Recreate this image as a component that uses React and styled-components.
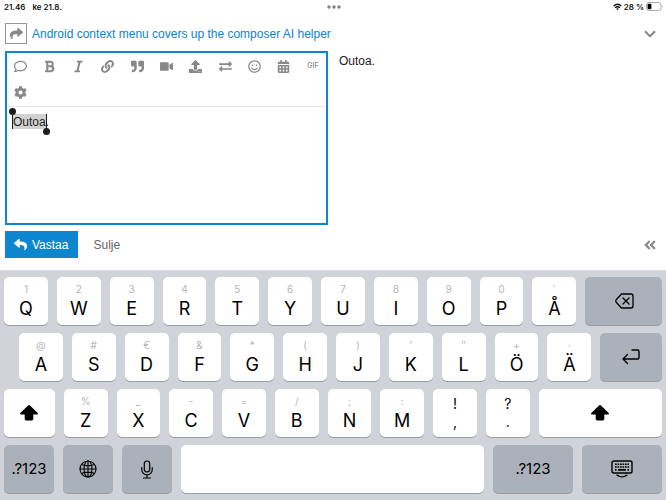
import React, { useState } from "react";
import styled, { createGlobalStyle } from "styled-components";
import {
  FaRegComment, FaBold, FaItalic, FaLink, FaQuoteRight, FaVideo, FaUpload,
  FaExchangeAlt, FaRegSmile, FaCalendarAlt, FaCog, FaReply, FaShare,
  FaAngleDoubleLeft,
} from "react-icons/fa";

const GlobalStyle = createGlobalStyle`
  *, *::before, *::after { box-sizing: border-box; }
  body {
    margin: 0;
    background: #fff;
    color: #222;
    font-family: "Liberation Sans", Arial, sans-serif;
    font-size: 12px;
  }
  button, textarea { font: inherit; color: inherit; margin: 0; }
  button { border: 0; padding: 0; background: none; cursor: pointer; }
  svg { display: block; flex: none; }
`;

const Screen = styled.div`
  min-height: 100vh;
  display: flex;
  flex-direction: column;
`;

const StatusBar = styled.header`
  display: grid;
  grid-template-columns: 1fr auto 1fr;
  align-items: center;
  height: 13px;
  padding: 0 3px 0 4px;
  font: 600 8px/12px Inter, sans-serif;
  color: #111;
`;

const StatusGroup = styled.div`
  display: flex;
  align-items: center;
  gap: ${(p) => (p.$end ? "2px" : "7px")};
  justify-content: ${(p) => (p.$end ? "flex-end" : "flex-start")};
`;

const Composer = styled.main`
  flex: 1;
  display: flex;
  flex-direction: column;
  padding: 10px 5px 12px;
`;

const TitleRow = styled.div`
  display: flex;
  align-items: center;
  gap: 5px;
  height: 21px;
  margin-bottom: 7px;
  padding-right: 5px;
  color: #888;
`;

const ActionButton = styled.button`
  display: grid;
  place-items: center;
  width: 22px;
  height: 21px;
  border: 1px solid #999;
  color: #888;
`;

const TopicLink = styled.a`
  flex: 1;
  color: #0f82c8;
  font-size: 12px;
  line-height: 16px;
  text-decoration: none;
`;

const Panes = styled.div`
  flex: 1;
  display: grid;
  grid-template-columns: 1fr 1fr;
  gap: 10px;
`;

const Editor = styled.section`
  display: flex;
  flex-direction: column;
  border: 2px solid #0e86cd;
`;

const Toolbar = styled.div`
  display: grid;
  grid-template-columns: repeat(11, 20px);
  grid-template-rows: 26px 27px;
  justify-content: space-between;
  margin: 0 1px;
  padding: 0 2px;
  border-bottom: 1px solid #e4e4e4;
`;

const ToolButton = styled.button`
  display: grid;
  place-items: center;
  color: #888;
  font-size: 13px;
`;

const GifLabel = styled.span`
  font: 500 7px/10px Inter, sans-serif;
`;

const TextWrap = styled.div`
  position: relative;
  flex: 1;
  display: flex;
`;

const TextBox = styled.textarea`
  position: relative;
  flex: 1;
  min-width: 0;
  padding: 7px 6px;
  border: 0;
  outline: 0;
  resize: none;
  background: transparent;
  line-height: 16px;
`;

const Selection = styled.span`
  position: absolute;
  top: 7px;
  left: 5px;
  height: 15px;
  line-height: 16px;
  background: #d2d2d2;
  border: solid #1c1c1c;
  border-width: 0 1px;
  color: transparent;
  &::before, &::after {
    content: "";
    position: absolute;
    width: 7px;
    height: 7px;
    border-radius: 50%;
    background: #1c1c1c;
  }
  &::before { left: -4px; top: -6px; }
  &::after { right: -4px; bottom: -6px; }
`;

const Preview = styled.section`
  padding-top: 2px;
  line-height: 16px;
  p { margin: 0; padding-left: 1px; }
`;

const Footer = styled.div`
  display: flex;
  align-items: center;
  height: 27px;
  margin-top: 6px;
  padding-right: 4px;
`;

const ReplyButton = styled.button`
  display: flex;
  align-items: center;
  gap: 5px;
  height: 27px;
  padding: 0 10px 0 9px;
  background: #0c87cf;
  color: #fff;
`;

const TextButton = styled.button`
  margin: 0 auto 0 15px;
  color: #666;
`;

const IconButton = styled.button`
  color: #888;
  font-size: 14px;
`;

const Keyboard = styled.section`
  display: flex;
  flex-direction: column;
  gap: 8px;
  padding: 7px 4px;
  background: #d0d3d9;
  box-shadow: inset 0 1px #d9dce1;
  font-family: Inter, sans-serif;
`;

const KeyRow = styled.div`
  display: flex;
  gap: 9px;
  height: 48px;
  padding-left: ${(p) => (p.$indent ? "15px" : "0")};
`;

const Key = styled.button`
  flex: ${(p) => p.$span} 1 0;
  min-width: 0;
  display: flex;
  flex-direction: column;
  align-items: center;
  justify-content: center;
  border-radius: 5px;
  background: ${(p) => (p.$dark ? "#abb1bb" : "#fff")};
  box-shadow: 0 1px 0 #9a9da3;
  color: #000;
  font-size: 15px;
  line-height: 20px;
`;

const Hint = styled.span`
  height: 16px;
  font-size: 10px;
  line-height: 16px;
  color: #b4b4b6;
`;

const Letter = styled.span`
  height: 24px;
  font-size: 18px;
  line-height: 24px;
`;

const Mark = styled.span`
  height: 18px;
  font-size: 14px;
  line-height: 18px;
`;

const line = { fill: "none", stroke: "currentColor", strokeLinecap: "round", strokeLinejoin: "round" };

const Dots = () => (
  <svg width="14" height="4" viewBox="0 0 14 4" fill="#808080">
    <circle cx="2" cy="2" r="1.7" /><circle cx="7" cy="2" r="1.7" /><circle cx="12" cy="2" r="1.7" />
  </svg>
);
const Wifi = () => (
  <svg width="9" height="8" viewBox="0 0 9 8" {...line} strokeWidth="1.3" strokeLinecap="butt">
    <path d="M.6 3.1Q4.5-.7 8.4 3.1M2.1 4.8Q4.5 2.6 6.9 4.8" />
    <path d="M3.2 5.8Q4.5 4.8 5.8 5.8L4.5 7.3Z" fill="currentColor" stroke="none" />
  </svg>
);
const Battery = () => (
  <svg width="17" height="9" viewBox="0 0 17 9">
    <rect x=".5" y=".5" width="14.5" height="8" rx="2.4" fill="none" stroke="#aaa" />
    <rect x="1.6" y="1.8" width="3.8" height="5.4" rx="1" />
    <path d="M16 3.3q1.3 1.2 0 2.4z" fill="#aaa" />
  </svg>
);
const ChevronDown = () => (
  <svg width="12" height="8" viewBox="0 0 12 8" {...line} strokeWidth="2" strokeLinecap="butt">
    <path d="M1 1.2 6 6.2 11 1.2" />
  </svg>
);
const Backspace = () => (
  <svg width="20" height="16" viewBox="0 0 20 16" {...line} strokeWidth="1.3">
    <path d="M7.5 1H17a2 2 0 0 1 2 2v10a2 2 0 0 1-2 2H7.500L2.2 9.2q-1-1.2 0-2.4ZM9 5l6 6M15 5l-6 6" />
  </svg>
);
const Return = () => (
  <svg width="18" height="16" viewBox="0 0 18 16" {...line} strokeWidth="1.4">
    <path d="M10 1h5.5a1.5 1.5 0 0 1 1.5 1.5v6a1.5 1.5 0 0 1-1.5 1.5H1M5.5 5.500 1 10l4.5 4.5" />
  </svg>
);
const Shift = () => (
  <svg width="18" height="16" viewBox="0 0 18 16">
    <path d="M8.3.3q.7-.6 1.4 0L17.7 8q.8 1.3-.6 1.4H13.3V14q0 1.4-1.4 1.4H6.1Q4.7 15.4 4.7 14V9.4H.9Q-.5 9.3.3 8Z" />
  </svg>
);
const Globe = () => (
  <svg width="18" height="18" viewBox="0 0 18 18" {...line} strokeWidth="1.1">
    <circle cx="9" cy="9" r="8" /><ellipse cx="9" cy="9" rx="4" ry="8" />
    <path d="M9 1v16M1 9h16M2.6 4.5q6.4 2.8 12.8 0M2.6 13.5q6.4-2.8 12.8 0" />
  </svg>
);
const Mic = () => (
  <svg width="12" height="19" viewBox="0 0 12 19" {...line} strokeWidth="1.2">
    <rect x="3.3" y="1" width="5.4" height="11" rx="2.7" />
    <path d="M.8 7.5v2.2a5.2 5.2 0 0 0 10.4 0V7.5M6 15v3M2.5 18h7" />
  </svg>
);
const HideKeyboard = () => (
  <svg width="22" height="18" viewBox="0 0 22 18" {...line} strokeWidth="1.4">
    <rect x="1" y="1" width="20" height="12" rx="1.8" />
    <path d="M4 4.3h14M4 7h14" strokeDasharray="1.7 .8" strokeLinecap="butt" strokeWidth="1.6" />
    <path d="M4 9.9h1.5M7 9.9h8M16.5 9.9H18" strokeLinecap="butt" strokeWidth="1.6" />
    <path d="M6 15.2q5 3.4 10 0" />
  </svg>
);

const tools = [
  ["Lainaa viesti", <FaRegComment />], ["Lihavoitu", <FaBold />], ["Kursiivi", <FaItalic />],
  ["Linkki", <FaLink />], ["Lainaus", <FaQuoteRight />], ["Video", <FaVideo />],
  ["Lataa", <FaUpload />], ["Vaihda suunta", <FaExchangeAlt />], ["Emoji", <FaRegSmile />],
  ["Päivämäärä", <FaCalendarAlt />], ["GIF", <GifLabel>GIF</GifLabel>], ["Asetukset", <FaCog />],
];

const letters = (list, hints) => list.split("").map((c, i) => [c, hints[i]]);
const topRow = letters("QWERTYUIOPÅ", "1234567890`");
const homeRow = letters("ASDFGHJKLÖÄ", "@#€&*()′″+·");
const bottomRow = letters("ZXCVBNM", "%_-=/;:");

const LetterKeys = ({ keys }) =>
  keys.map(([letter, hint]) => (
    <Key key={letter} $span={44}>
      <Hint>{hint}</Hint>
      <Letter>{letter}</Letter>
    </Key>
  ));

export default function App() {
  const [text, setText] = useState("Outoa.");
  return (
    <>
      <GlobalStyle />
      <Screen>
        <StatusBar>
          <StatusGroup><span>21.46</span><span>ke 21.8.</span></StatusGroup>
          <Dots />
          <StatusGroup $end><Wifi /><span>28 %</span><Battery /></StatusGroup>
        </StatusBar>
        <Composer>
          <TitleRow>
            <ActionButton aria-label="Vastaustapa"><FaShare size={13} /></ActionButton>
            <TopicLink href="#topic">Android context menu covers up the composer AI helper</TopicLink>
            <IconButton aria-label="Pienennä"><ChevronDown /></IconButton>
          </TitleRow>
          <Panes>
            <Editor>
              <Toolbar>
                {tools.map(([label, icon]) => (
                  <ToolButton key={label} aria-label={label}>{icon}</ToolButton>
                ))}
              </Toolbar>
              <TextWrap>
                <Selection aria-hidden="true">{text.replace(/\.$/, "")}</Selection>
                <TextBox aria-label="Viesti" value={text} onChange={(e) => setText(e.target.value)} />
              </TextWrap>
            </Editor>
            <Preview><p>{text}</p></Preview>
          </Panes>
          <Footer>
            <ReplyButton><FaReply size={13} />Vastaa</ReplyButton>
            <TextButton>Sulje</TextButton>
            <IconButton aria-label="Piilota esikatselu"><FaAngleDoubleLeft /></IconButton>
          </Footer>
        </Composer>
        <Keyboard aria-label="Näppäimistö">
          <KeyRow>
            <LetterKeys keys={topRow} />
            <Key $span={77} $dark aria-label="Askelpalautin"><Backspace /></Key>
          </KeyRow>
          <KeyRow $indent>
            <LetterKeys keys={homeRow} />
            <Key $span={62} $dark aria-label="Rivinvaihto"><Return /></Key>
          </KeyRow>
          <KeyRow>
            <Key $span={51} aria-label="Vaihto"><Shift /></Key>
            <LetterKeys keys={bottomRow} />
            <Key $span={44}><Mark>!</Mark><Mark>,</Mark></Key>
            <Key $span={44}><Mark>?</Mark><Mark>.</Mark></Key>
            <Key $span={124} aria-label="Vaihto"><Shift /></Key>
          </KeyRow>
          <KeyRow>
            <Key $span={50} $dark>.?123</Key>
            <Key $span={50} $dark aria-label="Kieli"><Globe /></Key>
            <Key $span={50} $dark aria-label="Sanelu"><Mic /></Key>
            <Key $span={303} aria-label="Välilyönti" />
            <Key $span={80} $dark>.?123</Key>
            <Key $span={80} $dark aria-label="Piilota näppäimistö"><HideKeyboard /></Key>
          </KeyRow>
        </Keyboard>
      </Screen>
    </>
  );
}
